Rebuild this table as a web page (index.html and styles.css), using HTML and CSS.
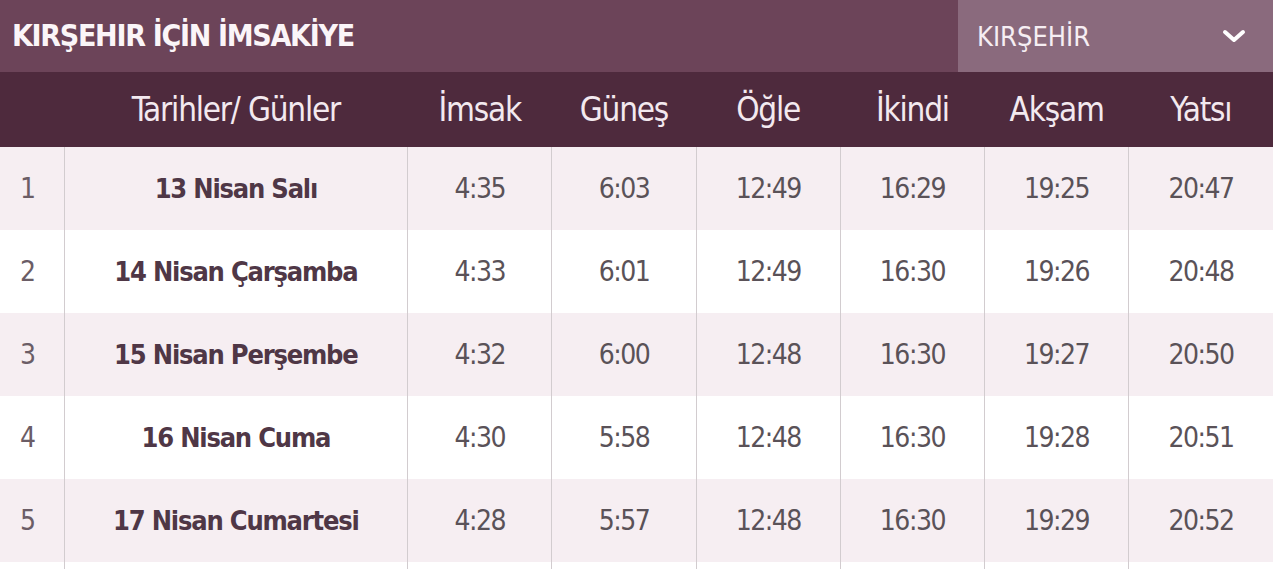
FILE: index.html
```html
<!DOCTYPE html>
<html lang="tr">
<head>
<meta charset="utf-8">
<title>Kırşehir İmsakiye</title>
<link rel="stylesheet" href="styles.css">
</head>
<body>
<div class="widget">
  <div class="titlebar">
    <h1 class="title">KIRŞEHIR İÇİN İMSAKİYE</h1>
    <div class="select">
      <span class="select-text">KIRŞEHİR</span>
      <svg class="chevron" width="26" height="16" viewBox="0 0 26 16"><path d="M4 4 L13 12 L22 4" fill="none" stroke="#fff" stroke-width="4" stroke-linecap="round" stroke-linejoin="round"/></svg>
    </div>
  </div>
  <table class="times">
    <colgroup>
      <col class="c-no"><col class="c-date"><col class="c-t"><col class="c-t"><col class="c-t"><col class="c-t"><col class="c-t"><col class="c-t">
    </colgroup>
    <thead>
      <tr><th></th><th>Tarihler/ Günler</th><th>İmsak</th><th>Güneş</th><th>Öğle</th><th>İkindi</th><th>Akşam</th><th>Yatsı</th></tr>
    </thead>
    <tbody>
      <tr><td class="no">1</td><td class="date">13 Nisan Salı</td><td>4:35</td><td>6:03</td><td>12:49</td><td>16:29</td><td>19:25</td><td>20:47</td></tr>
      <tr><td class="no">2</td><td class="date">14 Nisan Çarşamba</td><td>4:33</td><td>6:01</td><td>12:49</td><td>16:30</td><td>19:26</td><td>20:48</td></tr>
      <tr><td class="no">3</td><td class="date">15 Nisan Perşembe</td><td>4:32</td><td>6:00</td><td>12:48</td><td>16:30</td><td>19:27</td><td>20:50</td></tr>
      <tr><td class="no">4</td><td class="date">16 Nisan Cuma</td><td>4:30</td><td>5:58</td><td>12:48</td><td>16:30</td><td>19:28</td><td>20:51</td></tr>
      <tr><td class="no">5</td><td class="date">17 Nisan Cumartesi</td><td>4:28</td><td>5:57</td><td>12:48</td><td>16:30</td><td>19:29</td><td>20:52</td></tr>
      <tr class="partial"><td class="no"></td><td class="date"></td><td></td><td></td><td></td><td></td><td></td><td></td></tr>
    </tbody>
  </table>
</div>
</body>
</html>
```

FILE: styles.css
```css
html, body {
  margin: 0;
  padding: 0;
  background: #ffffff;
}
body {
  font-family: "DejaVu Sans Condensed", "Liberation Sans", sans-serif;
  overflow: hidden;
}
.widget {
  width: 1273px;
}
.titlebar {
  display: flex;
  height: 72px;
  background: #6c4459;
}
.title {
  flex: 1;
  margin: 0;
  padding-left: 12px;
  font-size: 30px;
  font-weight: bold;
  color: #fbf5f8;
  line-height: 72px;
  letter-spacing: -1.3px;
}
.select {
  width: 315px;
  background: #8a6a7d;
  display: flex;
  align-items: center;
  justify-content: space-between;
  padding: 0 26px 0 19px;
  box-sizing: border-box;
}
.select-text {
  font-size: 27px;
  color: #f6eef3;
}
.chevron {
  display: block;
}
.times {
  width: 1273px;
  border-collapse: collapse;
  table-layout: fixed;
}
.c-no { width: 64px; }
.c-date { width: 343px; }
.c-t { width: 144px; }
.times th {
  background: #4e2a3d;
  color: #f3e9ef;
  font-weight: normal;
  font-size: 33px;
  height: 75px;
  padding: 0;
  text-align: center;
  letter-spacing: -1.2px;
}
.times td {
  height: 83px;
  padding: 0;
  text-align: center;
  font-size: 28px;
  color: #5a5258;
  border-left: 1px solid #d2cccf;
  letter-spacing: -1.5px;
}
.times td:first-child {
  border-left: none;
}
.times tbody tr:nth-child(odd) td {
  background: #f6eef2;
}
.times tbody tr:nth-child(even) td {
  background: #ffffff;
}
.times td.no {
  text-align: left;
  padding-left: 20px;
  color: #6b5d66;
  letter-spacing: 0;
}
.times td.date {
  font-weight: bold;
  color: #4f3746;
  font-size: 27px;
  letter-spacing: -1.2px;
}
```
